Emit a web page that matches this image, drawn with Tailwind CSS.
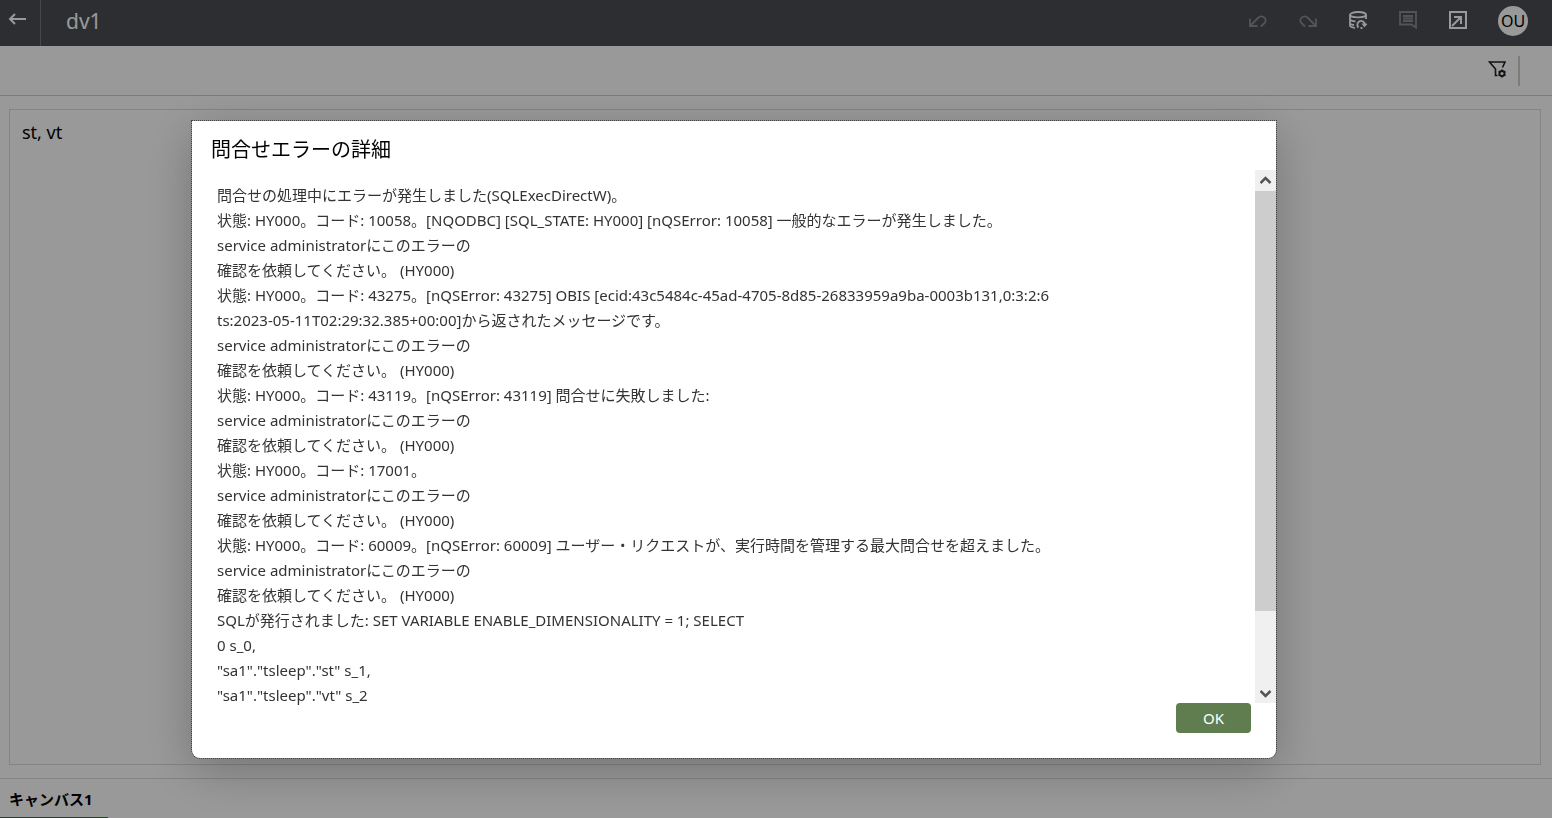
<!DOCTYPE html>
<html lang="ja">
<head>
  <meta charset="UTF-8">
  <title>dv1</title>
  <script src="https://cdn.jsdelivr.net/npm/@tailwindcss/browser@4"></script>
</head>

<body class="h-screen overflow-hidden bg-white font-['Noto_Sans','Noto_Sans_CJK_JP',sans-serif] text-black">
  <div class="h-full flex flex-col">
    <!-- Header -->
    <header class="h-[46px] shrink-0 flex items-center bg-[#4b4d53] text-white">
      <button aria-label="戻る" class="w-10 h-full pl-2 pt-2.5 flex items-start">
        <svg class="w-[18px] h-[18px]" viewBox="0 0 18 18" fill="none" stroke="currentColor" stroke-width="2">
          <path d="M18 9H2.500M7 4L2 9l5 5"/>
        </svg>
      </button>
      <div class="w-px h-full bg-[#76777c]"></div>
      <h1 class="flex-1 pl-[25px] pb-1 text-[21px] leading-8">dv1</h1>
      <div class="flex items-center gap-8 pr-6 pb-1">
        <div class="flex items-center gap-8 pb-0.5">
          <button aria-label="元に戻す" class="text-[#8b8c90]">
            <svg class="w-[18px] h-[18px]" viewBox="0 0 18 18" fill="none" stroke="currentColor" stroke-width="1.800">
              <path d="M1 7.500V15h7.500M1.500 14.500L9 7c1.500-1.500 3.500-2 5.500-1 2.500 1.300 2.800 4 1.200 5.800L12 15.500"/>
            </svg>
          </button>
          <button aria-label="やり直し" class="text-[#8b8c90]">
            <svg class="w-[18px] h-[18px]" viewBox="0 0 18 18" fill="none" stroke="currentColor" stroke-width="1.800">
              <path d="M17 7.500V15H9.500M16.500 14.500L9 7C7.500 5.500 5.500 5 3.500 6 1 7.300.7 10 2.300 11.800L6 15.500"/>
            </svg>
          </button>
          <button aria-label="データのリフレッシュ">
            <svg class="w-[18px] h-[18px]" viewBox="0 0 18 18" fill="none" stroke="currentColor" stroke-width="1.800">
              <ellipse cx="9" cy="3.700" rx="8" ry="2.700"/>
              <path d="M1 3.700v10.800c0 1.200 2 2 5 2.300M17 3.700V8M1 8c0 1.200 2.500 2.200 5.500 2.400M1 12c0 1 1.500 1.800 4 2"/>
              <path d="M9.500 16.500A3.800 3.800 0 1 1 15.500 12v1.500M11.500 17h2"/>
              <path d="M12.500 12.500H18.500L15.500 16.500z" fill="currentColor" stroke="none"/>
            </svg>
          </button>
          <button aria-label="コメント" class="text-[#8b8c90]">
            <svg class="w-[18px] h-[18px]" viewBox="0 0 18 18" fill="none" stroke="currentColor" stroke-width="1.800">
              <path d="M1 1h16v15.500L12.500 13.500H1zM4 5h10M4 7.500h10M4 10h10" />
            </svg>
          </button>
          <button aria-label="プレゼント">
            <svg class="w-[18px] h-[18px]" viewBox="0 0 18 18" fill="none" stroke="currentColor" stroke-width="2">
              <path d="M1 1h16v16H1zM5 6h7v7M12 6L3 15"/>
            </svg>
          </button>
        </div>
        <button class="-ml-px w-[30px] h-[30px] rounded-full bg-white text-black text-base">OU</button>
      </div>
    </header>

    <!-- Filter bar -->
    <div class="h-[50px] shrink-0 flex items-center justify-end gap-3 pr-8 border-b border-[#cfcfcf]">
      <button aria-label="フィルタ設定" class="pb-1 text-[#222]">
        <svg class="w-[18px] h-[18px]" viewBox="0 0 18 18" fill="none" stroke="currentColor" stroke-width="1.600">
          <path d="M14.500 7.500L17 2H1.500L7.500 9v6.500H9.500"/>
          <circle cx="14" cy="13.500" r="2.500" stroke-width="1.800"/>
          <path d="M14 9.500v1.500M14 16v1.500M10.500 11.500l1.300.8M16.200 14.700l1.300.8M10.500 15.500l1.300-.8M16.200 12.300l1.300-.8"/>
        </svg>
      </button>
      <div class="w-0.5 h-[30px] bg-[#d4cdc7]"></div>
    </div>

    <!-- Canvas -->
    <main class="flex-1 pt-[13px] pr-[11px] pb-[13px] pl-[9px]">
      <section class="h-full border border-[#dcdcdc] px-3 py-2">
        <h2 class="text-lg leading-7">st, vt</h2>
      </section>
    </main>

    <footer class="h-10 shrink-0 flex border-t border-[#dcdcdc]">
      <a href="#" class="w-[108px] pl-[9px] pt-1 border-b border-[#3f6a3c] text-[15px] leading-8 font-bold whitespace-nowrap">キャンバス1</a>
    </footer>
  </div>

  <!-- Error dialog -->
  <div class="fixed inset-0 flex bg-black/40 pt-[121px] pr-[276px] pb-[60px] pl-48">
    <div role="dialog" aria-labelledby="title" class="flex-1 min-w-0 flex flex-col bg-white rounded-b-lg outline-1 outline-dotted outline-[#444] shadow-[0_12px_48px_rgba(0,0,0,0.25)]">
      <h2 id="title" class="h-[49px] shrink-0 pl-[19px] pt-[13px] text-xl leading-8">問合せエラーの詳細</h2>
      <div class="flex-1 min-h-0 flex">
        <div id="message" class="flex-1 pl-[25px] pt-[13px] text-[15px] leading-[25px] text-[#333] whitespace-pre-line">問合せの処理中にエラーが発生しました(SQLExecDirectW)。
状態: HY000。コード: 10058。[NQODBC] [SQL_STATE: HY000] [nQSError: 10058] 一般的なエラーが発生しました。
service administratorにこのエラーの
確認を依頼してください。 (HY000)
状態: HY000。コード: 43275。[nQSError: 43275] OBIS [ecid:43c5484c-45ad-4705-8d85-26833959a9ba-0003b131,0:3:2:6
ts:2023-05-11T02:29:32.385+00:00]から返されたメッセージです。
service administratorにこのエラーの
確認を依頼してください。 (HY000)
状態: HY000。コード: 43119。[nQSError: 43119] 問合せに失敗しました:
service administratorにこのエラーの
確認を依頼してください。 (HY000)
状態: HY000。コード: 17001。
service administratorにこのエラーの
確認を依頼してください。 (HY000)
状態: HY000。コード: 60009。[nQSError: 60009] ユーザー・リクエストが、実行時間を管理する最大問合せを超えました。
service administratorにこのエラーの
確認を依頼してください。 (HY000)
SQLが発行されました: SET VARIABLE ENABLE_DIMENSIONALITY = 1; SELECT
0 s_0,
"sa1"."tsleep"."st" s_1,
"sa1"."tsleep"."vt" s_2</div>
        <!-- Scrollbar -->
        <div class="w-[21px] flex flex-col bg-[#f0f0f0] text-[#555]">
          <button aria-label="上へ" class="h-[21px] flex items-center justify-center">
            <svg class="w-3 h-3" viewBox="0 0 12 12" fill="none" stroke="currentColor" stroke-width="2.500"><path d="M.5 8L5.500 3l5 5"/></svg>
          </button>
          <div class="flex-1">
            <div class="h-[85.5%] bg-[#cdcdcd]"></div>
          </div>
          <button aria-label="下へ" class="h-[21px] flex items-center justify-center">
            <svg class="w-3 h-3" viewBox="0 0 12 12" fill="none" stroke="currentColor" stroke-width="2.500"><path d="M.5 4L5.500 9l5-5"/></svg>
          </button>
        </div>
      </div>
      <div class="h-[55px] shrink-0 flex justify-end items-start pr-[25px]">
        <button class="w-[75px] h-[30px] rounded bg-[#5f7d4f] text-white text-[15px]">OK</button>
      </div>
    </div>
  </div>
</body>
</html>
